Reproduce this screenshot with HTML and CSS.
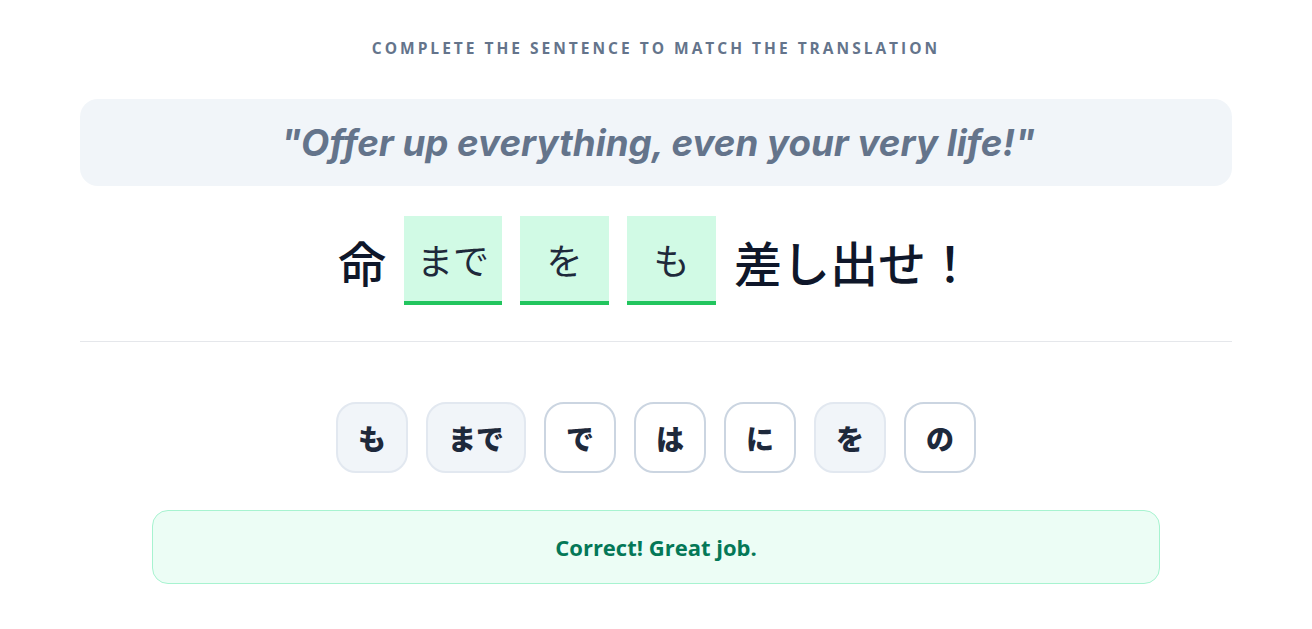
FILE: index.html
```html
<!DOCTYPE html>
<html lang="ja">
<head>
<meta charset="utf-8">
<title>Sentence builder</title>
<link rel="stylesheet" href="styles.css">
</head>
<body>
<main class="page">
  <h1 class="prompt">Complete the sentence to match the translation</h1>
  <div class="translation">"Offer up everything, even your very life!"</div>
  <div class="sentence">
    <span class="word">命</span>
    <span class="blank">まで</span>
    <span class="blank">を</span>
    <span class="blank">も</span>
    <span class="word">差し出せ！</span>
  </div>
  <hr class="divider">
  <div class="bank">
    <button class="chip used">も</button>
    <button class="chip used">まで</button>
    <button class="chip">で</button>
    <button class="chip">は</button>
    <button class="chip">に</button>
    <button class="chip used">を</button>
    <button class="chip">の</button>
  </div>
  <div class="feedback">Correct! Great job.</div>
</main>
</body>
</html>
```
FILE: styles.css
```css
* { box-sizing: border-box; }
html, body { margin: 0; padding: 0; background: #ffffff; }
body {
  font-family: "Open Sans", "Noto Sans", "Noto Sans CJK JP", sans-serif;
  color: #0f172a;
}
.page {
  width: 1152px;
  margin: 0 auto;
  padding-top: 38px;
  display: flex;
  flex-direction: column;
  align-items: center;
}
.prompt {
  margin: 0;
  font-size: 15.5px;
  line-height: 20px;
  font-weight: 700;
  letter-spacing: 3px;
  text-transform: uppercase;
  color: #64748b;
}
.translation {
  margin-top: 41px;
  width: 100%;
  background: #f1f5f9;
  border-radius: 18px;
  padding: 24px 0 24px 4px;
  text-align: center;
  font-family: "Inter", "Noto Sans", sans-serif;
  font-style: italic;
  font-weight: 700;
  font-size: 36.7px;
  line-height: 39px;
  color: #64748b;
}
.sentence {
  margin-top: 30px;
  display: flex;
  align-items: center;
  gap: 18px;
  font-family: "Noto Sans CJK JP", sans-serif;
}
.word {
  font-size: 48px;
  line-height: 56px;
  font-weight: 500;
  color: #0f172a;
}
.blank {
  height: 89px;
  min-width: 89px;
  padding: 0 13px;
  display: flex;
  align-items: center;
  justify-content: center;
  background: #d1fae5;
  border-bottom: 4px solid #22c55e;
  font-size: 36px;
  font-weight: 400;
  color: #1e293b;
}
.divider {
  margin: 36px 0 0;
  width: 100%;
  border: 0;
  border-top: 1px solid #e5e7eb;
}
.bank {
  margin-top: 60px;
  display: flex;
  gap: 18px;
}
.chip {
  height: 71px;
  min-width: 72px;
  padding: 0 20px;
  border: 2px solid #cbd5e1;
  border-radius: 20px;
  background: #ffffff;
  font-family: "Noto Sans CJK JP", sans-serif;
  font-size: 28px;
  font-weight: 900;
  color: #1e293b;
  display: flex;
  align-items: center;
  justify-content: center;
}
.chip.used {
  background: #f1f5f9;
  border-color: #e2e8f0;
}
.feedback {
  margin-top: 37px;
  width: 1008px;
  height: 74px;
  display: flex;
  align-items: center;
  justify-content: center;
  background: #ecfdf5;
  border: 1px solid #a7f3d0;
  border-radius: 16px;
  font-size: 22px;
  font-weight: 700;
  color: #047857;
}
```
